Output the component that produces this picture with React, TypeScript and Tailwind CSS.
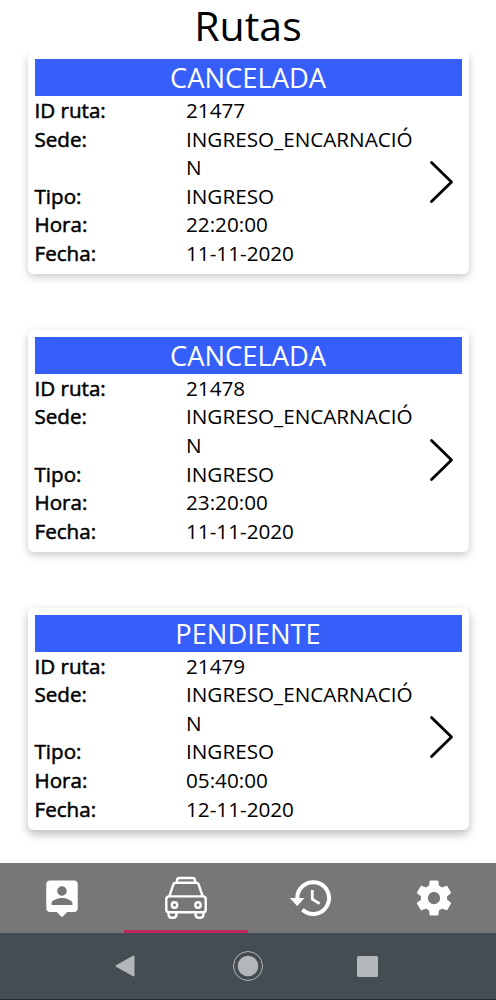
const routes = [
  { id: '21477', status: 'CANCELADA', sede: 'INGRESO_ENCARNACIÓN', tipo: 'INGRESO', hora: '22:20:00', fecha: '11-11-2020' },
  { id: '21478', status: 'CANCELADA', sede: 'INGRESO_ENCARNACIÓN', tipo: 'INGRESO', hora: '23:20:00', fecha: '11-11-2020' },
  { id: '21479', status: 'PENDIENTE', sede: 'INGRESO_ENCARNACIÓN', tipo: 'INGRESO', hora: '05:40:00', fecha: '12-11-2020' },
];

type Route = (typeof routes)[number];

function Row({ label, value }: { label: string; value: string }) {
  return (
    <div className="flex">
      <dt className="w-[151.5px] shrink-0 [-webkit-text-stroke:0.5px_black]">{label}</dt>
      <dd className="w-[235px] break-all text-[20.7px]">{value}</dd>
    </div>
  );
}

function RouteCard({ route }: { route: Route }) {
  return (
    <article className="h-[222px] rounded-md bg-white px-[7px] pt-[7px] shadow-[0_3px_9px_rgba(0,0,0,0.22)] last:shadow-[0_4px_10px_rgba(0,0,0,0.28)]">
      <h2 className="h-[37px] bg-[#365ef8] text-center text-[27.3px] leading-[38px] text-white">
        {route.status}
      </h2>
      <div className="flex items-center">
        <dl className="w-[388px] text-[20.6px] leading-[28.6px]">
          <Row label="ID ruta:" value={route.id} />
          <Row label="Sede:" value={route.sede} />
          <Row label="Tipo:" value={route.tipo} />
          <Row label="Hora:" value={route.hora} />
          <Row label="Fecha:" value={route.fecha} />
        </dl>
        <svg
          viewBox="0 0 36 44"
          className="h-11 w-9"
          fill="none"
          stroke="black"
          strokeWidth="2.8"
          strokeLinecap="round"
          strokeLinejoin="round"
        >
          <path d="M8.5 2.5 28.5 22 8.5 41.5" />
        </svg>
      </div>
    </article>
  );
}

function PersonIcon() {
  return (
    <svg viewBox="0 0 24 24" className="size-[42px]" fill="white">
      <path d="M19 2H5c-1.100 0-2 .9-2 2v14c0 1.100.9 2 2 2h4l3 3 3-3h4c1.100 0 2-.9 2-2V4c0-1.100-.9-2-2-2zm-7 3.300c1.490 0 2.700 1.210 2.700 2.700s-1.210 2.700-2.700 2.700S9.300 9.490 9.300 8s1.210-2.700 2.700-2.700zM18 16H6v-.9c0-2 4-3.100 6-3.100s6 1.100 6 3.100v.9z" />
    </svg>
  );
}

function TaxiIcon() {
  return (
    <svg viewBox="0 0 44 44" className="size-11" fill="none" stroke="white" strokeWidth="2.4" strokeLinejoin="round">
      <path d="M13 6.500V4.300q0-2.300 2.300-2.300h13.400q2.300 0 2.300 2.300v2.200" />
      <path d="M5.300 20.500 9.300 8.700q.6-2 2.600-2h20.200q2 0 2.600 2l4 11.800" />
      <path d="M2.300 23.300q0-2.900 2.900-2.900h33.600q2.900 0 2.900 2.900v10.400q0 2.600-2.600 2.600H4.900q-2.600 0-2.600-2.600z" />
      <path d="M4.600 36.500v2.100q0 3.200 3.200 3.200h1.400q3.200 0 3.200-3.200v-2.100M31.600 36.500v2.100q0 3.200 3.200 3.200h1.400q3.200 0 3.200-3.200v-2.100" />
      <circle cx="10.500" cy="29" r="2.700" />
      <circle cx="34" cy="29" r="2.700" />
    </svg>
  );
}

function HistoryIcon() {
  return (
    <svg viewBox="0 0 44 44" className="size-11" fill="none" stroke="white">
      <path d="M9.300 23A15.900 15.900 0 1 1 14.400 33.800" strokeWidth="4" />
      <path d="M24.300 14v9.200l7.300 4.400" strokeWidth="2.800" />
      <path d="M1.800 22h14.600l-7.200 8z" fill="white" stroke="none" />
    </svg>
  );
}

function GearIcon() {
  return (
    <svg viewBox="0 0 24 24" className="size-[42px]" fill="white">
      <path d="M19.430 12.980c.04-.32.07-.64.07-.98s-.03-.66-.07-.98l2.110-1.650c.19-.15.24-.42.12-.64l-2-3.460c-.12-.22-.39-.3-.61-.22l-2.490 1c-.52-.4-1.080-.73-1.690-.98l-.38-2.650C14.460 2.180 14.250 2 14 2h-4c-.25 0-.46.18-.49.42l-.38 2.650c-.61.25-1.170.59-1.690.98l-2.490-1c-.23-.09-.49 0-.61.22l-2 3.460c-.13.22-.07.49.12.64l2.110 1.650c-.04.32-.07.65-.07.98s.03.66.07.98l-2.110 1.650c-.19.15-.24.42-.12.64l2 3.460c.12.22.39.3.61.22l2.490-1c.52.4 1.080.73 1.690.98l.38 2.650c.03.24.24.42.49.42h4c.25 0 .46-.18.49-.42l.38-2.650c.61-.25 1.170-.59 1.690-.98l2.490 1c.23.09.49 0 .61-.22l2-3.460c.12-.22.07-.49-.12-.64l-2.110-1.650zM12 15.500c-1.930 0-3.500-1.570-3.500-3.500s1.570-3.500 3.500-3.500 3.500 1.570 3.500 3.500-1.570 3.500-3.500 3.500z" />
    </svg>
  );
}

const tab = 'flex items-center justify-center border-b-[3px] border-transparent pt-[3px]';

export default function App() {
  return (
    <div className="flex h-[1000px] w-[496px] flex-col bg-white font-['Open_Sans',sans-serif] text-black">
      <h1 className="h-[53px] shrink-0 text-center text-[41px] leading-[51px]">Rutas</h1>

      <main className="h-[810px] shrink-0 overflow-hidden px-[27.5px]">
        <div className="-mt-px flex flex-col gap-[55.8px]">
          {routes.map((r) => (
            <RouteCard key={r.id} route={r} />
          ))}
        </div>
      </main>

      <nav className="grid h-[70px] shrink-0 grid-cols-4 bg-[#777777]">
        <button className={tab}>
          <PersonIcon />
        </button>
        <button className="flex items-center justify-center border-b-[3px] border-[#bf2860] pt-[3px]">
          <TaxiIcon />
        </button>
        <button className={tab}>
          <HistoryIcon />
        </button>
        <button className={tab}>
          <GearIcon />
        </button>
      </nav>

      <footer className="flex h-[67px] shrink-0 items-center justify-center border-b border-[#25292d] bg-[#454c52] pr-[5px]">
        <svg viewBox="0 0 24 24" className="mr-[95px] size-6" fill="#b2b7b9" stroke="#b2b7b9" strokeWidth="2" strokeLinejoin="round">
          <path d="M3.500 12 20.500 2.500v19z" />
        </svg>
        <svg viewBox="0 0 32 32" className="size-8" fill="#b2b7b9">
          <circle cx="16" cy="16" r="14.500" fill="none" stroke="#b2b7b9" />
          <circle cx="16" cy="16" r="10.300" />
        </svg>
        <div className="ml-[93px] size-[21px] rounded-[1.5px] bg-[#b2b7b9]" />
      </footer>
    </div>
  );
}
